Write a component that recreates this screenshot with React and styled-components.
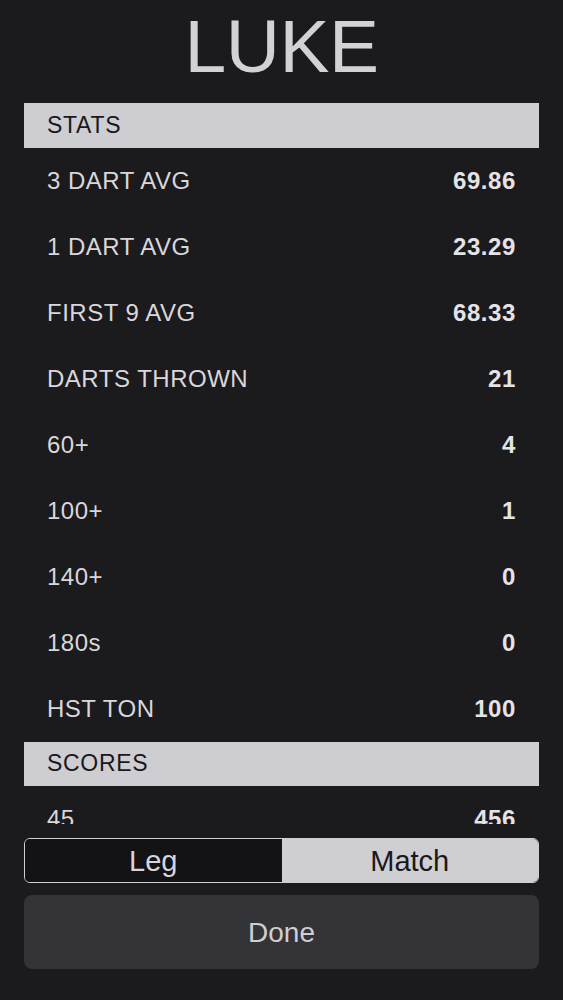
import React from "react";
import styled, { createGlobalStyle } from "styled-components";

const Global = createGlobalStyle`
  html, body { margin: 0; padding: 0; background: #1b1a1d; }
  body { font-family: "Liberation Sans", Arial, Helvetica, sans-serif; }
  * { box-sizing: border-box; }
`;

const Page = styled.div`
  height: 1000px;
  display: flex;
  flex-direction: column;
  padding: 0 24px 31px;
  background: #1b1a1d;
  color: #d8d7db;
`;

const Title = styled.h1`
  margin: 0 0 19px;
  padding-top: 9px;
  font-size: 75px;
  line-height: 75px;
  font-weight: 400;
  text-align: center;
  color: #d2d1d5;
  letter-spacing: -0.5px;
`;

const ScrollArea = styled.div`
  flex: 1;
  min-height: 0;
  overflow: hidden;
`;

const SectionHeader = styled.div`
  height: 44.5px;
  display: flex;
  align-items: center;
  padding-left: 23px;
  background: #cecdd1;
  color: #19181b;
  font-size: 23px;
  letter-spacing: 0.7px;
`;

const Row = styled.div`
  height: 66px;
  display: flex;
  align-items: center;
  justify-content: space-between;
  padding: 0 23px;
`;

const Label = styled.span`
  font-size: 24px;
  letter-spacing: 0.5px;
  color: #d8d7db;
`;

const Value = styled.span`
  font-size: 24px;
  font-weight: 700;
  letter-spacing: 0.6px;
  color: #e4e3e7;
`;

const Segmented = styled.div`
  margin-top: 14px;
  height: 45px;
  display: flex;
  border: 1.5px solid #cfced2;
  border-radius: 6px;
  overflow: hidden;
`;

const Segment = styled.div`
  flex: 1;
  display: flex;
  align-items: center;
  justify-content: center;
  padding-top: 2px;
  font-size: 29px;
  background: ${(p) => (p.$active ? "#cfced2" : "#131215")};
  color: ${(p) => (p.$active ? "#19181b" : "#d6d5d9")};
`;

const DoneButton = styled.button`
  margin-top: 12px;
  height: 74px;
  width: 100%;
  border: none;
  border-radius: 8px;
  background: #343337;
  color: #cfced2;
  font-family: inherit;
  font-size: 28px;
  display: flex;
  align-items: center;
  justify-content: center;
  padding: 2px 0 0;
`;

const stats = [
  ["3 DART AVG", "69.86"],
  ["1 DART AVG", "23.29"],
  ["FIRST 9 AVG", "68.33"],
  ["DARTS THROWN", "21"],
  ["60+", "4"],
  ["100+", "1"],
  ["140+", "0"],
  ["180s", "0"],
  ["HST TON", "100"],
];

const scores = [["45", "456"]];

export default function App() {
  return (
    <>
      <Global />
      <Page>
        <Title>LUKE</Title>
        <ScrollArea>
          <SectionHeader>STATS</SectionHeader>
          {stats.map(([l, v]) => (
            <Row key={l}>
              <Label>{l}</Label>
              <Value>{v}</Value>
            </Row>
          ))}
          <SectionHeader>SCORES</SectionHeader>
          {scores.map(([l, v]) => (
            <Row key={l}>
              <Label>{l}</Label>
              <Value>{v}</Value>
            </Row>
          ))}
        </ScrollArea>
        <Segmented>
          <Segment>Leg</Segment>
          <Segment $active>Match</Segment>
        </Segmented>
        <DoneButton>Done</DoneButton>
      </Page>
    </>
  );
}
